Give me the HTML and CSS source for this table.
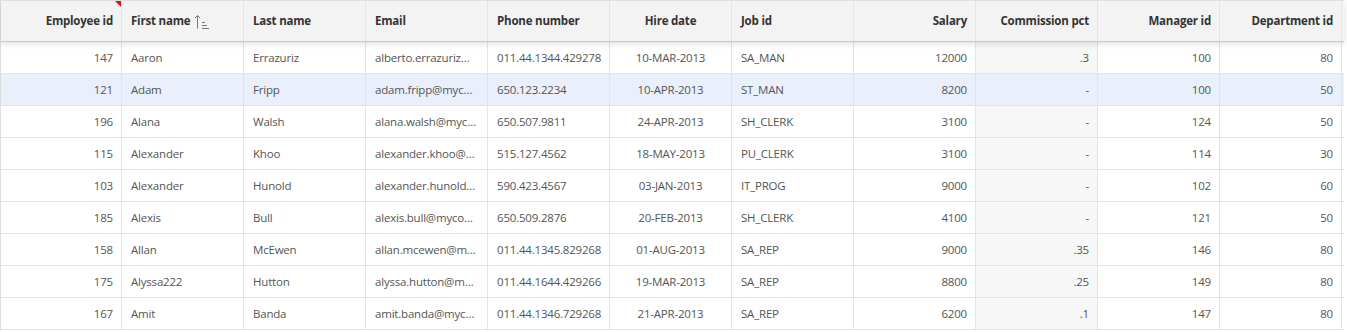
FILE: index.html
```html
<!DOCTYPE html>
<html lang="en">
<head>
  <meta charset="UTF-8">
  <title>Employees</title>
  <link rel="stylesheet" href="styles.css">
</head>
<body>
  <div class="grid">
    <div class="row head">
      <div class="cell num marked">Employee id</div>
      <div class="cell">First name
        <svg class="sort-icon" width="16" height="16" viewBox="0 0 16 16">
          <path d="M3.5 1.5v13M1 4l2.5-2.5L6 4" fill="none" stroke="#777" stroke-width="1"/>
          <path d="M8 8.5h3M8 11.5h5M8 14.5h7" fill="none" stroke="#777" stroke-width="1"/>
        </svg>
      </div>
      <div class="cell">Last name</div>
      <div class="cell">Email</div>
      <div class="cell">Phone number</div>
      <div class="cell center">Hire date</div>
      <div class="cell">Job id</div>
      <div class="cell num">Salary</div>
      <div class="cell num">Commission pct</div>
      <div class="cell num">Manager id</div>
      <div class="cell num">Department id</div>
    </div>

    <div class="row">
      <div class="cell num">147</div><div class="cell">Aaron</div><div class="cell">Errazuriz</div>
      <div class="cell">alberto.errazuriz@mycompany.com</div><div class="cell phone">011.44.1344.429278</div>
      <div class="cell center">10-MAR-2013</div><div class="cell">SA_MAN</div><div class="cell num">12000</div>
      <div class="cell num ro">.3</div><div class="cell num">100</div><div class="cell num">80</div>
    </div>
    <div class="row selected">
      <div class="cell num">121</div><div class="cell">Adam</div><div class="cell">Fripp</div>
      <div class="cell">adam.fripp@mycompany.com</div><div class="cell phone">650.123.2234</div>
      <div class="cell center">10-APR-2013</div><div class="cell">ST_MAN</div><div class="cell num">8200</div>
      <div class="cell num ro">-</div><div class="cell num">100</div><div class="cell num">50</div>
    </div>
    <div class="row">
      <div class="cell num">196</div><div class="cell">Alana</div><div class="cell">Walsh</div>
      <div class="cell">alana.walsh@mycompany.com</div><div class="cell phone">650.507.9811</div>
      <div class="cell center">24-APR-2013</div><div class="cell">SH_CLERK</div><div class="cell num">3100</div>
      <div class="cell num ro">-</div><div class="cell num">124</div><div class="cell num">50</div>
    </div>
    <div class="row">
      <div class="cell num">115</div><div class="cell">Alexander</div><div class="cell">Khoo</div>
      <div class="cell">alexander.khoo@mycompany.com</div><div class="cell phone">515.127.4562</div>
      <div class="cell center">18-MAY-2013</div><div class="cell">PU_CLERK</div><div class="cell num">3100</div>
      <div class="cell num ro">-</div><div class="cell num">114</div><div class="cell num">30</div>
    </div>
    <div class="row">
      <div class="cell num">103</div><div class="cell">Alexander</div><div class="cell">Hunold</div>
      <div class="cell">alexander.hunold@mycompany.com</div><div class="cell phone">590.423.4567</div>
      <div class="cell center">03-JAN-2013</div><div class="cell">IT_PROG</div><div class="cell num">9000</div>
      <div class="cell num ro">-</div><div class="cell num">102</div><div class="cell num">60</div>
    </div>
    <div class="row">
      <div class="cell num">185</div><div class="cell">Alexis</div><div class="cell">Bull</div>
      <div class="cell">alexis.bull@mycompany.com</div><div class="cell phone">650.509.2876</div>
      <div class="cell center">20-FEB-2013</div><div class="cell">SH_CLERK</div><div class="cell num">4100</div>
      <div class="cell num ro">-</div><div class="cell num">121</div><div class="cell num">50</div>
    </div>
    <div class="row">
      <div class="cell num">158</div><div class="cell">Allan</div><div class="cell">McEwen</div>
      <div class="cell">allan.mcewen@mycompany.com</div><div class="cell phone">011.44.1345.829268</div>
      <div class="cell center">01-AUG-2013</div><div class="cell">SA_REP</div><div class="cell num">9000</div>
      <div class="cell num ro">.35</div><div class="cell num">146</div><div class="cell num">80</div>
    </div>
    <div class="row">
      <div class="cell num">175</div><div class="cell">Alyssa222</div><div class="cell">Hutton</div>
      <div class="cell">alyssa.hutton@mycompany.com</div><div class="cell phone">011.44.1644.429266</div>
      <div class="cell center">19-MAR-2013</div><div class="cell">SA_REP</div><div class="cell num">8800</div>
      <div class="cell num ro">.25</div><div class="cell num">149</div><div class="cell num">80</div>
    </div>
    <div class="row">
      <div class="cell num">167</div><div class="cell">Amit</div><div class="cell">Banda</div>
      <div class="cell">amit.banda@mycompany.com</div><div class="cell phone">011.44.1346.729268</div>
      <div class="cell center">21-APR-2013</div><div class="cell">SA_REP</div><div class="cell num">6200</div>
      <div class="cell num ro">.1</div><div class="cell num">147</div><div class="cell num">80</div>
    </div>
  </div>
</body>
</html>
```

FILE: styles.css
```css
body {
  margin: 0;
  font-family: 'Open Sans', sans-serif;
  font-size: 11.5px;
  letter-spacing: -0.2px;
  color: #555;
  background: #fff;
  overflow: hidden;
}
.grid {
  width: 1343px;
  border-left: 1px solid #ddd;
  border-top: 1px solid #e6e6e6;
}
.row {
  display: flex;
  height: 32px;
  border-bottom: 1px solid #e4e4e4;
  box-sizing: border-box;
}
.row.selected {
  background-color: #e9f0fb;
}
.row.head {
  height: 41px;
  background-color: #f3f3f3;
  border-bottom: 1px solid #c9c9c9;
  box-shadow: 0 2px 6px rgba(0, 0, 0, 0.12);
  position: relative;
  z-index: 1;
  font-weight: bold;
  color: #333;
}
.cell {
  width: 122px;
  flex: none;
  box-sizing: border-box;
  padding: 0 8px 0 9px;
  border-right: 1px solid #e4e4e4;
  display: flex;
  align-items: center;
  white-space: nowrap;
  overflow: hidden;
  text-overflow: ellipsis;
  line-height: 31px;
}
.row:not(.head) .cell {
  display: block;
}
.cell:first-child {
  width: 121px;
}
.cell.phone {
  padding-right: 5px;
}
.cell.num {
  justify-content: flex-end;
  text-align: right;
  padding: 0 8px;
}
.cell.center {
  justify-content: center;
  text-align: center;
  padding: 0 8px;
}
.cell.ro {
  background-color: #f7f7f7;
}
.row.selected .cell.ro {
  background-color: transparent;
}
.head .cell {
  line-height: 40px;
}
.marked {
  position: relative;
}
.marked::after {
  content: "";
  position: absolute;
  top: 0;
  right: 0;
  border-top: 6px solid #e8101e;
  border-left: 6px solid transparent;
}
.sort-icon {
  margin-left: 4px;
  margin-top: 1px;
}
```
